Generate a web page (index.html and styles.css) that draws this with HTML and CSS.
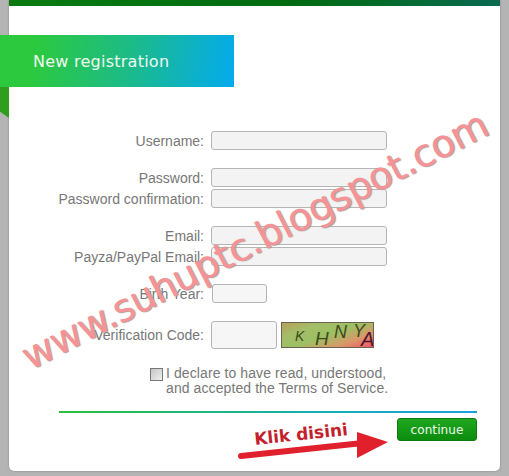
FILE: index.html
```html
<!DOCTYPE html>
<html lang="en">
<head>
<meta charset="utf-8">
<title>New registration</title>
<link rel="stylesheet" href="styles.css">
</head>
<body>
<div class="card">
  <div class="topbar"></div>
  <div class="ribbon"><h1>New registration</h1></div>
  <div class="fold"></div>
  <form class="form">
    <div class="group">
      <div class="row"><label>Username:</label><span class="input"></span></div>
    </div>
    <div class="group">
      <div class="row"><label>Password:</label><span class="input"></span></div>
      <div class="row"><label>Password confirmation:</label><span class="input"></span></div>
    </div>
    <div class="group">
      <div class="row"><label>Email:</label><span class="input"></span></div>
      <div class="row"><label>Payza/PayPal Email:</label><span class="input"></span></div>
    </div>
    <div class="group">
      <div class="row"><label>Birth Year:</label><span class="input short"></span></div>
    </div>
    <div class="group">
      <div class="row tall"><label>Verification Code:</label><span class="input code"></span>
        <div class="captcha"><i class="c1">K</i><i class="c2">H</i><i class="c3">N</i><i class="c4">Y</i><i class="c5">A</i></div>
      </div>
    </div>
    <div class="terms">
      <span class="check"></span>
      <p>I declare to have read, understood,<br>and accepted the Terms of Service.</p>
    </div>
    <div class="rule"></div>
    <div class="actions"><span class="button">continue</span></div>
  </form>
  <div class="watermark">www.suhuptc.blogspot.com</div>
  <div class="klik">Klik disini</div>
  <svg class="arrow" width="160" height="40" viewBox="0 0 160 40"><path d="M3 27 L125 14" stroke="#e0202c" stroke-width="6" stroke-linecap="round" fill="none"/><path d="M119 3 L150 13 L119 29 Z" fill="#e0202c"/></svg>
</div>
</body>
</html>
```
FILE: styles.css
```css
html, body { margin: 0; padding: 0; }
body { width: 509px; height: 476px; background: #b4b4b4; overflow: hidden; font-family: "Liberation Sans", Arial, sans-serif; }
.card { position: relative; width: 491px; height: 471px; margin-left: 9px; background: #fff; border-radius: 0 0 5px 5px; box-shadow: 0 0 2px #777; overflow: visible; }
.topbar { height: 6px; background: linear-gradient(90deg, #0b7a10, #006a12 60%, #0a6a50); }
.ribbon { position: absolute; left: -9px; top: 35px; width: 234px; height: 52px; background: linear-gradient(100deg, #2cc93e 15%, #1cbb88 55%, #04aaee); display: flex; align-items: center; }
.ribbon h1 { margin: 0 0 0 33px; font: normal 16px "DejaVu Sans", sans-serif; letter-spacing: 0.25px; color: #f1f8ee; }
.fold { position: absolute; left: -9px; top: 87px; width: 9px; height: 31px; background: #2f9e1e; clip-path: polygon(0 0, 100% 0, 100% 100%, 0 80%); }
.form { padding-top: 125px; display: flex; flex-direction: column; }
.group { display: flex; flex-direction: column; gap: 2px; margin-bottom: 18px; }
.row { display: flex; align-items: center; height: 19px; }
.row.tall { height: 28px; }
.row label { width: 195px; margin-right: 7px; text-align: right; font-size: 14px; color: #777; }
.input { box-sizing: border-box; display: block; width: 176px; height: 19px; background: #f3f3f3; border: 1px solid #b5b5b5; border-radius: 3px; }
.input.short { width: 55px; background: #f6f6f6; margin-left: 1px; }
.input.code { width: 66px; height: 28px; background: #f6f6f6; }
.captcha { position: relative; box-sizing: border-box; width: 93px; height: 26px; margin-left: 4px; border: 1px solid #6b6350; background: linear-gradient(160deg, #b5a05c 0, #a4bd68 25%, #9cc064 50%, #d79a68 75%, #f0556a 100%); overflow: hidden; color: #3e4a1c; }
.captcha i { position: absolute; font-family: "Liberation Sans", sans-serif; font-style: italic; line-height: 1; }
.c1 { left: 13px; top: 6px; font-size: 14px; font-family: "Liberation Serif", serif; }
.c2 { left: 33px; top: 6px; font-size: 19px; }
.c3 { left: 52px; top: 0; font-size: 18px; }
.c4 { left: 71px; top: -1px; font-size: 18px; }
.c5 { left: 79px; top: 6px; font-size: 20px; color: #57142e; }
.terms { display: flex; margin: -3px 0 0 141px; align-items: flex-start; gap: 3px; }
.check { box-sizing: border-box; display: block; width: 13px; height: 13px; margin-top: 4px; border: 1px solid #777; background: linear-gradient(135deg, #c4c4c4, #f0f0f0); }
.terms p { margin: 0; font-size: 14px; line-height: 15px; letter-spacing: 0.09px; color: #777; padding-top: 2px; }
.rule { height: 2px; margin: 15px 23px 0 50px; background: linear-gradient(90deg, #2fbf3c, #14aeb0 60%, #1aa0dc); }
.actions { display: flex; justify-content: flex-end; margin: 5px 23px 0 0; }
.button { box-sizing: border-box; width: 80px; height: 23px; text-align: center; font: 12px/22px "DejaVu Sans", sans-serif; letter-spacing: 0.1px; color: #f2f8ee; background: linear-gradient(#1ea81e, #0b8c0e); border: 1px solid #0f7c12; border-radius: 3px; }
.watermark { position: absolute; left: 15px; top: 336px; width: 530px; font: 38.5px "DejaVu Sans", sans-serif; letter-spacing: -0.5px; white-space: nowrap; color: #f79296; text-shadow: 1px 1px 1px #999; transform: rotate(-27.2deg); transform-origin: 0 50%; pointer-events: none; }
.klik { position: absolute; left: 245px; top: 424px; font: bold 17px "DejaVu Sans", sans-serif; color: #c41f2c; transform: rotate(-6deg); white-space: nowrap; }
.arrow { position: absolute; left: 229px; top: 429px; }
```
